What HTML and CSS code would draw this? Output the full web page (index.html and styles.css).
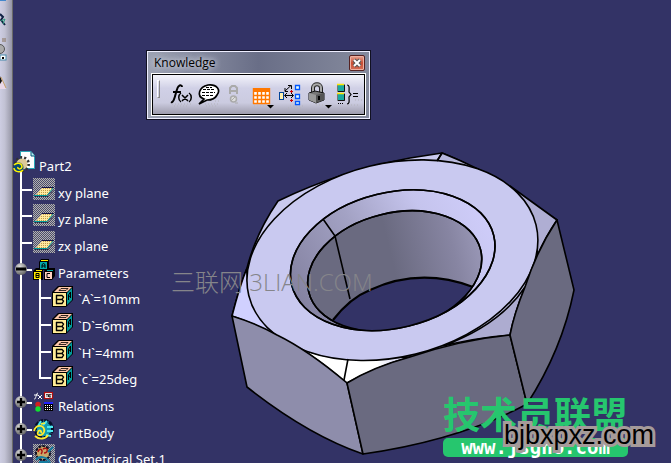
FILE: index.html
```html
<!DOCTYPE html>
<html lang="en">
<head>
<meta charset="utf-8">
<title>Part2</title>
<link rel="stylesheet" href="styles.css">
</head>
<body>
<svg width="0" height="0" class="defs" aria-hidden="true">
  <defs>
    <pattern id="dither" width="2" height="2" patternUnits="userSpaceOnUse">
      <rect width="2" height="2" fill="#4a4a70"/><rect width="1" height="1" fill="#b4b4ac"/><rect x="1" y="1" width="1" height="1" fill="#b4b4ac"/>
    </pattern>
    <pattern id="gold" width="2" height="2" patternUnits="userSpaceOnUse">
      <rect width="2" height="2" fill="#ffe9a0"/><rect width="1" height="1" fill="#c09a48"/>
    </pattern>
    <radialGradient id="ball" cx=".4" cy=".3" r=".7"><stop offset="0" stop-color="#ddd"/><stop offset="1" stop-color="#666"/></radialGradient>
    <symbol id="plane" viewBox="0 0 22 22">
      <rect width="22" height="22" fill="url(#dither)" shape-rendering="crispEdges"/>
      <path d="M2 18L9 10H20L14 18Z" fill="url(#gold)"/>
      <path d="M9 9.500H21" stroke="#111144" stroke-width="1"/>
      <path d="M1 17.500H14L20 10" fill="none" stroke="#099" stroke-width="1"/>
      <path d="M2 18.500H15L21 12" fill="none" stroke="#223" stroke-dasharray="1 1"/>
    </symbol>
    <symbol id="cube" viewBox="0 0 22 22">
      <path d="M0 6L6 0H21V14L14 21H0Z" fill="#000"/>
      <path d="M2 6L7 1H20L15 6Z" fill="#ffc8aa"/><path d="M7 4.500L9 2.500H16L14 4.500Z" fill="none" stroke="#000" stroke-width=".8"/>
      <path d="M15 7L20 2V14L15 19Z" fill="#099"/><path d="M16.500 14V9L18.500 6V12M16.500 11L18.500 9.500" fill="none" stroke="#000" stroke-width="1"/>
      <rect x="1" y="7" width="13" height="13" fill="#ffeb96"/>
      <path d="M4 9.500H10L11.500 11L10 13.500L11.500 15L10 17.500H4M4.500 9V18M4 13.500H10" fill="none" stroke="#000" stroke-width="1.400"/>
    </symbol>
    <symbol id="plus" viewBox="0 0 14 14"><circle cx="7" cy="7" r="6" fill="url(#ball)"/><path d="M3 7H11M7 3V11" stroke="#000" stroke-width="2.4"/></symbol>
    <symbol id="minus" viewBox="0 0 14 14"><circle cx="7" cy="7" r="6" fill="url(#ball)"/><path d="M2 7H12" stroke="#000" stroke-width="3"/></symbol>
  </defs>
</svg>

<aside class="dock" aria-label="Docked tools">
  <svg viewBox="0 0 12 150" aria-hidden="true">
    <path d="M0 0H6" stroke="#48c" stroke-width="2"/>
    <path d="M0 14L3 17L1 20L5 25" fill="none" stroke="#124" stroke-width="2"/><path d="M1 21L5 19L3 24" stroke="#2a9a7a" fill="none"/>
    <path d="M2 39H6M2 41H6" stroke="#86705a"/>
    <circle cx="0" cy="49" r="4.5" fill="#aaa" stroke="#555"/>
    <rect x="0" y="55" width="6" height="5" fill="#fff" stroke="#48a"/><rect x="2" y="57" width="2" height="2" fill="#000"/>
    <path d="M0 76L6 89H0Z" fill="#ead8e8"/><path d="M0 76L2 81L0 84Z" fill="#111"/><path d="M1 77L6 88" stroke="#c9a36a"/>
  </svg>
</aside>

<main class="workspace">
  <ul class="tree">
    <li class="node root">
      <svg class="icon" viewBox="0 0 24 25" aria-hidden="true">
        <path d="M8 20V28" stroke="#fff" stroke-width="2"/>
        <path d="M7.500 .5H18L21.500 4.500V17.500H7.500Z" fill="#fff" stroke="#2aa6b8"/><path d="M18 1V5H22" fill="#bdeef0" stroke="#057"/>
        <circle cx="9" cy="13" r="6.500" fill="none" stroke="#333" stroke-width="3" stroke-dasharray="2 2"/>
        <circle cx="9" cy="13" r="5.500" fill="#dcc898"/>
        <circle cx="5.500" cy="16.500" r="5" fill="#064a70"/><path d="M1 14C4 11 9 12 9 16C8 19 4 18 5 16M1 17C1 21 8 22 10 19" fill="none" stroke="#fff200" stroke-width="1.500"/>
      </svg><span>Part2</span></li>
    <li class="node"><svg class="branch" aria-hidden="true"><path d="M10 -4V28M10 12H21"/></svg><svg class="icon" aria-hidden="true"><use href="#plane"/></svg><span>xy plane</span></li>
    <li class="node"><svg class="branch" aria-hidden="true"><path d="M10 0V28M10 12H21"/></svg><svg class="icon" aria-hidden="true"><use href="#plane"/></svg><span>yz plane</span></li>
    <li class="node"><svg class="branch" aria-hidden="true"><path d="M10 0V28M10 12H21"/></svg><svg class="icon" aria-hidden="true"><use href="#plane"/></svg><span>zx plane</span></li>
    <li class="node"><svg class="branch" aria-hidden="true"><path d="M10 0V28M10 12H21"/><use href="#minus" x="2" y="4" width="14" height="14"/></svg>
      <svg class="icon" viewBox="0 0 22 22" aria-hidden="true"><path d="M6 4L8 1H16V12H6ZM0 13L3 10H10V22H0ZM11 13L13 10H22V18L19 22H11Z" fill="#000"/><path d="M8 2.500H15" stroke="#ffeb00"/><path d="M7 4H14V11H7Z" fill="#0aa"/><path d="M1 14H8V21H1Z" fill="#ffe600"/><path d="M3 12.500H9" stroke="#ffe600"/><path d="M14 12.500H20" stroke="#0aa"/><path d="M12 14H19V21H12Z" fill="#ffd0c0"/><path d="M9 10V6.500L10.500 5.500L12 6.500V10M9 8H12M3 19.500V15.500H6V19.500ZM3 17.500H6M17 15.500H14V19.500H17" fill="none" stroke="#000"/></svg><span>Parameters</span></li>
    <li class="node child"><svg class="branch" aria-hidden="true"><path d="M10 0V28M29 -5V28M29 14H40"/></svg><svg class="icon" aria-hidden="true"><use href="#cube"/></svg><span>`A`=10mm</span></li>
    <li class="node child"><svg class="branch" aria-hidden="true"><path d="M10 0V28M29 0V28M29 14H40"/></svg><svg class="icon" aria-hidden="true"><use href="#cube"/></svg><span>`D`=6mm</span></li>
    <li class="node child"><svg class="branch" aria-hidden="true"><path d="M10 0V28M29 0V28M29 14H40"/></svg><svg class="icon" aria-hidden="true"><use href="#cube"/></svg><span>`H`=4mm</span></li>
    <li class="node child"><svg class="branch" aria-hidden="true"><path d="M10 0V28M29 0V14H40"/></svg><svg class="icon" aria-hidden="true"><use href="#cube"/></svg><span>`c`=25deg</span></li>
    <li class="node"><svg class="branch" aria-hidden="true"><path d="M10 0V28M10 12H21"/><use href="#plus" x="2" y="4" width="14" height="14"/></svg>
      <svg class="icon" viewBox="0 0 22 22" aria-hidden="true"><path d="M1 8C3 9 3 2 5 2M1 4H5M5 4L9 8M9 4L5 8" fill="none" stroke="#fff"/><rect x="11.500" y="1.500" width="8" height="6" fill="#fff" stroke="#b01010" stroke-width="1.200"/><path d="M13 3.500H15.500V6M13 5H18M18.500 3.500H16V6H18" stroke="#000" fill="none" stroke-width=".7"/><circle cx="5" cy="13.500" r="2.700" fill="#d02020"/><circle cx="5" cy="18" r="2.700" fill="#10e030"/><path d="M11 11H20V20H11Z" fill="#000"/><path d="M11 12H20" stroke="#22f" stroke-width="2"/><path d="M12 14.500H20M12 16.500H20M12 18.500H20" stroke="#fff" stroke-dasharray="1 1"/></svg><span>Relations</span></li>
    <li class="node"><svg class="branch" aria-hidden="true"><path d="M10 0V28M10 12H21"/><use href="#plus" x="2" y="4" width="14" height="14"/></svg>
      <svg class="icon" viewBox="0 0 22 22" aria-hidden="true"><circle cx="11" cy="11" r="8.500" fill="#139cae" stroke="#06102a" stroke-width="3" stroke-dasharray="4 1"/><path d="M5 8L8 3M10 7L14 3M14 9H20M14 13H20M13 17L18 18" stroke="#4de7ef" stroke-width="2"/><path d="M1 13C3 5 13 7 11 14C9 19 3 17 5 14C6 11 9 13 8 15M2 18C6 22 13 21 15 17M8 6L12 5" fill="none" stroke="#ffeb30" stroke-width="1.800"/></svg><span>PartBody</span></li>
    <li class="node"><svg class="branch" aria-hidden="true"><path d="M10 0V28M10 12H21"/><use href="#plus" x="2" y="4" width="14" height="14"/></svg>
      <svg class="icon" viewBox="0 0 22 22" aria-hidden="true"><rect width="22" height="22" fill="url(#dither)"/><circle cx="10" cy="9" r="7" fill="#caa868" stroke="#112" stroke-width="2" stroke-dasharray="3 1"/><path d="M5 8C7 2 11 7 8 10M10 5C15 2 16 9 11 9" fill="none" stroke="#a11" stroke-width="1.500"/><path d="M15 8L20 3M3 16C6 11 15 13 17 19M6 18H15" fill="none" stroke="#157ca0" stroke-width="2"/></svg><span>Geometrical Set.1</span></li>
  </ul>
</main>

<svg class="model" viewBox="0 0 671 463" role="img" aria-label="Hexagonal nut model">
  <defs>
    <linearGradient id="bore" x1="0" x2="1"><stop offset=".5" stop-color="#6a6a80"/><stop offset=".85" stop-color="#8785a2"/><stop offset="1" stop-color="#9896b5"/></linearGradient>
    <linearGradient id="bevel" x1="0" x2="1" y1=".5" y2=".3"><stop offset="0" stop-color="#8583a2"/><stop offset=".4" stop-color="#a3a2c4"/><stop offset=".72" stop-color="#c5c4ed"/><stop offset="1" stop-color="#cfcdfa"/></linearGradient>
    <linearGradient id="tip" x1="0" x2="1"><stop offset=".7" stop-color="#fff"/><stop offset="1" stop-color="#c8c8f0"/></linearGradient>
    <clipPath id="rim"><ellipse cx="392.700" cy="260.200" rx="104" ry="67.700" transform="rotate(-13.800 392.700 260.200)"/></clipPath>
    <clipPath id="hole"><ellipse cx="394.700" cy="271" rx="88.500" ry="58" transform="rotate(-13.800 394.700 271)"/></clipPath>
  </defs>
  <g stroke="#000" stroke-width="1.600" stroke-linejoin="round" fill="none">
    <path d="M278 201Q340 171 410 158L442 153Q480 167 557 220L537 255L510 335L347 383L232 316Q240 285 247 268Q256 233 278 201Z" fill="#c9c9ef"/>
    <path d="M232 316Q240 285 247 268Q245 300 276 335Q255 324 232 316Z" fill="#d0d0ff"/>
    <path d="M442 153L437 161Q480 166 510 187Q480 168 442 153Z" fill="#b8b8dc"/>
    <path d="M510 186L557 220Q546 236 537 256Q540 215 510 186Z" fill="#afaed3"/>
    <path d="M525 287Q500 325 443 346Q475 338 510 335Q514 314 525 287Z" fill="#adacd0"/>
    <path d="M300 348Q320 357 348 359L410 357Q378 366 347 383Q324 364 300 348Z" fill="url(#tip)"/>
    <ellipse cx="392.400" cy="260.200" rx="147.900" ry="96.700" transform="rotate(-13.800 392.400 260.200)" fill="#c9c9f0"/>
    <path d="M232 316Q258 324 277 335Q308 350 347 383L363 454Q308 435 247 387Z" fill="#8e8dab"/>
    <path d="M347 383Q373 367 410 357Q460 340 510 335L527 404Q460 440 363 454Z" fill="#6a6a80"/>
    <path d="M510 335Q514 314 525 287Q537 250 557 220L574 290Q562 350 527 404Z" fill="#6a6a80"/>
    <path d="M348 359L344 380M442 153L437 161"/>
    <ellipse cx="392.700" cy="260.200" rx="104" ry="67.700" transform="rotate(-13.800 392.700 260.200)" fill="url(#bevel)"/>
    <g clip-path="url(#rim)">
      <ellipse cx="394.700" cy="271" rx="88.500" ry="58" transform="rotate(-13.800 394.700 271)" fill="url(#bore)"/>
      <g clip-path="url(#hole)">
        <path d="M333 320Q350 298 370 290Q420 267 473 287L490 300Q425 350 350 340Z" fill="#333366" stroke="none"/>
        <path d="M333 320Q350 298 370 290Q420 267 473 287" stroke-width="2.200"/>
      </g>
      <path d="M323 219L335 236L350 299"/>
      <ellipse cx="394.700" cy="271" rx="88.500" ry="58" transform="rotate(-13.800 394.700 271)"/>
    </g>
    <ellipse cx="392.700" cy="260.200" rx="104" ry="67.700" transform="rotate(-13.800 392.700 260.200)"/>
  </g>
</svg>

<section class="palette" aria-label="Knowledge">
  <header class="palette-title"><h1>Knowledge</h1>
    <button class="close" aria-label="Close"><svg viewBox="0 0 12 12" aria-hidden="true"><path d="M3 3L9 9M9 3L3 9" stroke="#555" stroke-width="4"/><path d="M3 3L9 9M9 3L3 9" stroke="#fff" stroke-width="2"/></svg></button>
  </header>
  <div class="tools">
    <span class="grip"></span>
    <button aria-label="Formula"><svg viewBox="0 0 28 30"><path d="M5 24H24M7 26H21" stroke="#b4b4bc" stroke-dasharray="1 2"/><path d="M4 22C8 24 9 7 12 6C13 5 15 5 15 7M6 12H14" fill="none" stroke="#000" stroke-width="2"/><path d="M14 13C11 15 11 20 14 22M22 13C25 15 25 20 22 22M15 15L21 21M21 15L15 21" fill="none" stroke="#000" stroke-width="1.500"/></svg></button>
    <button aria-label="Comment"><svg viewBox="0 0 28 30"><path d="M10 24H25M11 26H23M20 21H26" stroke="#b4b4bc" stroke-dasharray="1 2"/><path d="M4 24L9 19C1 16 4 7 13 5C22 4 26 10 22 15C20 19 16 20 12 20Z" fill="#fff" stroke="#000" stroke-width="1.700"/><path d="M8 9.500H19M7 12.500H20M7 15.500H19M11 7.500H17" stroke="#000" stroke-dasharray="3 1"/></svg></button>
    <button aria-label="Check" disabled><svg viewBox="0 0 28 30"><path d="M7 14V8L9 6H12L14 8V14M7 11H14" fill="none" stroke="#aaa" stroke-width="2"/><circle cx="10.500" cy="19" r="3" fill="#ddd" stroke="#aaa" stroke-width="1.500"/><path d="M8 21L13 16M12 23H15" stroke="#aaa"/></svg></button>
    <button aria-label="Design table"><svg viewBox="0 0 28 30"><rect x="2" y="8" width="17" height="16" fill="#fff"/><path d="M2 8H19V12H2Z" fill="#ff7800"/><path d="M2.500 8V24M6.500 8V24M10.500 8V24M14.500 8V24M18.500 8V24M2 15.500H19M2 19.500H19M2 23.500H19" stroke="#ff7800" stroke-width="1.400"/><path d="M16 25H23L19.500 28.500Z" fill="#000"/><path d="M3 26H15" stroke="#bbb" stroke-dasharray="1 2"/></svg></button>
    <button aria-label="Dependencies"><svg viewBox="0 0 28 30"><path d="M11 26H24M9 28H22" stroke="#b4b4bc" stroke-dasharray="1 2"/><rect x=".5" y="12.500" width="4" height="7" fill="#fff3b0" stroke="#049"/><path d="M6 11L12 5.500M9 5.500H12.500V9M6 8V11.500H9M6 15.500H14M8 13L5.500 15.500L8 18M12 13L14.500 15.500L12 18" fill="none" stroke="#000"/><path d="M16.500 5.500H20.500V9.500H16.500ZM16.500 14.500H20.500V18.500H16.500ZM16.500 21.500H20.500V24.500H16.500Z" fill="#e8fff8" stroke="#05f" stroke-width="1.300"/><path d="M11 11.500H14M12.500 10V13M11 20.500H14M12.500 19V22" stroke="#c00"/></svg></button>
    <button aria-label="Lock"><svg viewBox="0 0 28 30"><path d="M6 13V8C6 3 14 3 14 8V13" fill="none" stroke="#222" stroke-width="4"/><path d="M6 13V8C6 3 14 3 14 8V13" fill="none" stroke="#aaa" stroke-width="2"/><path d="M2 13L8 11L17 13V20L9 23L2 20Z" fill="#777" stroke="#111"/><path d="M9 15L17 13V20L9 23Z" fill="#555"/><path d="M2 13L9 15V23L2 20Z" fill="#999"/><rect x="11" y="16" width="2" height="4" fill="#000"/><path d="M18 25H25L21.500 28.500Z" fill="#000"/><path d="M9 25H17" stroke="#bbb" stroke-dasharray="1 2"/></svg></button>
    <button aria-label="Equations"><svg viewBox="0 0 28 30"><path d="M13 25H23M20 20H27" stroke="#b4b4bc" stroke-dasharray="1 2"/><path d="M2.500 4.500H9.500V11.500H2.500ZM2.500 13.500H9.500V20.500H2.500Z" fill="#1aa9a0" stroke="#777"/><path d="M2 4.500H9M2 13.500H9" stroke="#ffe600" stroke-width="1.600"/><path d="M9.500 5V11.500H3M9.500 14V20.500H3" fill="none" stroke="#111"/><path d="M3 23.500H9" stroke="#000" stroke-dasharray="1 1"/><path d="M12 5C15 5 14 9 14 12L16 14.500L14 17C14 20 15 24 12 24" fill="none" stroke="#000" stroke-width="1.200"/><path d="M18 13.500H23M18 16.500H23" stroke="#000" stroke-width="1.200"/></svg></button>
  </div>
</section>

<div class="watermark">三联网 3LIAN.COM</div>
<div class="stamp"><span class="stamp-name">技术员联盟</span><span class="stamp-url">www.jsgho.com</span></div>
<div class="site">bjbxpxz.com</div>
</body>
</html>
```

FILE: styles.css
```css
* { box-sizing: border-box; }

body {
  margin: 0;
  height: 100vh;
  display: flex;
  position: relative;
  overflow: hidden;
  background: #333366;
  font-family: "Noto Sans", "Open Sans", sans-serif;
}

.defs { position: absolute; }

.dock {
  flex: 0 0 13px;
  border-right: 1px solid #6a6a68;
  background: linear-gradient(90deg, #cdcde2 0, #c2c2d4 40%, #9696a6 100%);
}

.dock svg { display: block; width: 12px; height: 150px; }

.workspace { flex: 1; padding-top: 151px; }

.tree {
  list-style: none;
  margin: 0;
  padding: 0;
  height: 320px;
  display: grid;
  grid-auto-rows: 1fr;
  color: #fff;
  font-size: 13px;
  line-height: 30px;
}

.node { display: flex; min-height: 0; white-space: nowrap; }
.node span { margin-left: 3px; }
.branch { flex: none; width: 20px; height: 26px; overflow: visible; }
.branch path { fill: none; stroke: #fff; stroke-width: 2; transform: translateX(-2px); }
.child .branch { width: 39px; }
.icon { flex: none; width: 22px; height: 22px; }
.child .icon { margin-top: 2px; }
.child span { margin-left: 4px; }
.root .icon { width: 24px; height: 25px; overflow: visible; }
.root span { margin-left: 2px; }
.branch use { transform: translateX(-1px); }

.model { position: absolute; left: 0; top: 0; width: 100vw; height: auto; }

.palette {
  position: absolute;
  left: 146px;
  top: 50px;
  padding: 0 4px 3px;
  border: 1px solid #111122;
  background: linear-gradient(90deg, #9da2b3, #696e87 50%, #858a9d);
  box-shadow: inset 0 0 0 1px #eef;
}

.palette-title {
  height: 22px;
  display: flex;
  align-items: center;
  justify-content: space-between;
  padding: 1px 1px 0 3px;
}

.palette-title h1 {
  margin: 0;
  font: 400 12px "Open Sans", sans-serif;
  color: #000;
  text-shadow: 0 0 6px #d5d8e4, 0 0 6px #d5d8e4;
}

.close {
  width: 16px;
  height: 16px;
  padding: 1px;
  border: 1px solid #552222;
  border-radius: 2px;
  background: linear-gradient(#e8a695, #c94c32 50%, #d47058);
  box-shadow: inset 0 0 0 1px #eeb0a0;
}

.close svg { display: block; width: 12px; height: 12px; }

.tools {
  display: flex;
  border: 1px solid #fff;
  outline: 1px solid #000;
  outline-offset: -2px;
  padding: 6px 2px 5px 5px;
  background: linear-gradient(#f6f6fc, #d0d0e6 35%, #cbcbe0 70%, #9a98a8);
}

.grip { width: 3px; height: 18px; margin-right: 7px; border: 1px solid #fff; border-right-color: #888; border-bottom-color: #888; }
.tools button { width: 28px; height: 30px; padding: 0; border: 0; background: none; }
.tools button svg { display: block; width: 28px; height: 30px; }

.watermark {
  position: absolute;
  left: 171px;
  top: 266px;
  font: 300 24px/32px "Open Sans", "Noto Sans CJK SC", sans-serif;
  color: #85858a;
  white-space: nowrap;
}

.stamp {
  position: absolute;
  left: 443px;
  top: 392px;
  display: flex;
  flex-direction: column;
  color: #26c66e;
}

.stamp-name { font: 700 37px/42px "Noto Sans CJK SC", sans-serif; }

.stamp-url {
  margin-top: 4px;
  border-radius: 5px;
  background: #26c66e;
  color: #fff;
  font: 700 19px/19px "DejaVu Sans Mono", monospace;
  text-align: center;
}

.site {
  position: absolute;
  left: 504px;
  top: 416px;
  font: 400 27px/38px "Liberation Sans", sans-serif;
  color: #000;
  -webkit-text-stroke: 6px #a59b9a;
  paint-order: stroke fill;
  stroke-linejoin: round;
}
```
